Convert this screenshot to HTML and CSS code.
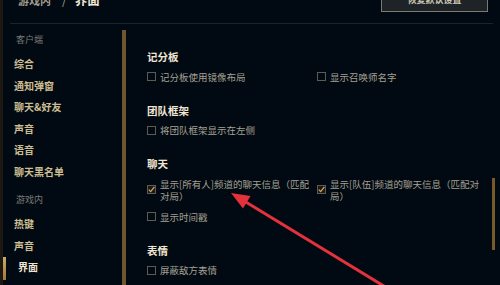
FILE: index.html
```html
<!DOCTYPE html>
<html lang="zh-CN">
<head>
<meta charset="utf-8">
<link rel="stylesheet" href="styles.css">
</head>
<body>
<div class="app">
  <div class="edge"></div>
  <div class="main">
    <header class="header">
      <div class="crumb"><span class="crumb-parent">游戏内</span><span class="crumb-sep">/</span><span class="crumb-cur">界面</span></div>
      <button class="reset">恢复默认设置</button>
    </header>
    <div class="body">
      <nav class="sidebar">
        <div class="nav-label">客户端</div>
        <div class="nav-item">综合</div>
        <div class="nav-item">通知弹窗</div>
        <div class="nav-item">聊天&amp;好友</div>
        <div class="nav-item">声音</div>
        <div class="nav-item">语音</div>
        <div class="nav-item">聊天黑名单</div>
        <div class="nav-label second">游戏内</div>
        <div class="nav-item">热键</div>
        <div class="nav-item">声音</div>
        <div class="nav-item active">界面</div>
      </nav>
      <div class="nav-scroll"></div>
      <div class="content">
        <div class="settings">
          <section class="group">
            <h3 class="group-title">记分板</h3>
            <div class="opts">
              <label class="opt"><span class="box"></span><span class="opt-text">记分板使用镜像布局</span></label>
              <label class="opt"><span class="box"></span><span class="opt-text">显示召唤师名字</span></label>
            </div>
          </section>
          <section class="group">
            <h3 class="group-title">团队框架</h3>
            <div class="opts">
              <label class="opt"><span class="box"></span><span class="opt-text">将团队框架显示在左侧</span></label>
            </div>
          </section>
          <section class="group">
            <h3 class="group-title">聊天</h3>
            <div class="opts">
              <label class="opt"><span class="box checked"><svg viewBox="0 0 9 9" width="9" height="9"><path d="M1.8 4.6 L3.7 6.6 L7.4 1.8" fill="none" stroke="#c8aa6e" stroke-width="1.3"/></svg></span><span class="opt-text">显示[所有人]频道的聊天信息（匹配对局）</span></label>
              <label class="opt"><span class="box checked"><svg viewBox="0 0 9 9" width="9" height="9"><path d="M1.8 4.6 L3.7 6.6 L7.4 1.8" fill="none" stroke="#c8aa6e" stroke-width="1.3"/></svg></span><span class="opt-text">显示[队伍]频道的聊天信息（匹配对局）</span></label>
              <label class="opt"><span class="box"></span><span class="opt-text">显示时间戳</span></label>
            </div>
          </section>
          <section class="group">
            <h3 class="group-title">表情</h3>
            <div class="opts">
              <label class="opt"><span class="box"></span><span class="opt-text">屏蔽敌方表情</span></label>
            </div>
          </section>
        </div>
        <div class="vscroll"><div class="vthumb"></div></div>
      </div>
    </div>
  </div>
  <svg class="arrow" viewBox="0 0 500 285" width="500" height="285">
    <line x1="392" y1="291" x2="245" y2="201.5" stroke="#e5323a" stroke-width="3" stroke-linecap="round"/>
    <polygon points="231,193 243,208.5 250.5,196" fill="#e5323a"/>
  </svg>
</div>
</body>
</html>
```

FILE: styles.css
```css
html, body {
  margin: 0;
  padding: 0;
  height: 100%;
  overflow: hidden;
  background: #010a13;
}
body {
  font-family: "Noto Sans CJK SC", "Noto Sans", sans-serif;
  color: #a09b8c;
}
.app {
  position: relative;
  display: flex;
  height: 285px;
  width: 500px;
  overflow: hidden;
}
.edge {
  width: 3px;
  flex-shrink: 0;
  background: #1d1812;
}
.main {
  flex: 1;
  display: flex;
  flex-direction: column;
  min-width: 0;
}
.header {
  height: 23px;
  margin: 0 7px 0 7px;
  border-bottom: 1px solid #1b2329;
  display: flex;
  justify-content: space-between;
  align-items: flex-start;
  flex-shrink: 0;
}
.crumb {
  margin-top: -8px;
  margin-left: 8px;
  display: flex;
  align-items: center;
  font-size: 12px;
  line-height: 16px;
  font-weight: 700;
}
.crumb-parent {
  color: #a09b8c;
  font-size: 11px;
}
.crumb-sep {
  color: #a09b8c;
  margin: 0 8px 0 11px;
  font-weight: 400;
}
.crumb-cur {
  color: #f0e6d2;
  font-size: 12.5px;
}
.reset {
  margin-top: -12px;
  margin-right: 5px;
  width: 107px;
  height: 24px;
  background: #1e2328;
  border: 1px solid #7c7a6e;
  color: #cdc6b2;
  font-family: inherit;
  font-size: 9px;
  font-weight: 700;
  padding: 0;
  line-height: 22px;
}
.body {
  flex: 1;
  display: flex;
  min-height: 0;
}
.sidebar {
  position: relative;
  width: 119px;
  flex-shrink: 0;
  padding-top: 10px;
  box-sizing: border-box;
}
.nav-label {
  font-size: 9px;
  line-height: 12px;
  color: #7b7a74;
  padding-left: 13px;
  margin-bottom: 7px;
}
.nav-label.second {
  margin-top: 12px;
}
.nav-item {
  position: relative;
  height: 21.5px;
  line-height: 21.5px;
  font-size: 10px;
  font-weight: 700;
  color: #cdbe91;
  padding-left: 11px;
}
.nav-item.active {
  color: #f0e6d2;
  padding-left: 15px;
}
.nav-item.active::before {
  content: "";
  position: absolute;
  left: 0;
  top: 1px;
  width: 3px;
  height: 23px;
  background: linear-gradient(#c8aa6e, #a27a32);
}
.nav-scroll {
  width: 4px;
  flex-shrink: 0;
  margin-top: 6px;
  background: #6f5630;
}
.content {
  flex: 1;
  display: flex;
  min-width: 0;
}
.settings {
  flex: 1;
  padding: 26px 0 0 21px;
}
.group {
  margin-bottom: 21px;
}
.group-title {
  margin: 0 0 6.5px 0;
  font-size: 10.5px;
  line-height: 14px;
  font-weight: 700;
  color: #f0e6d2;
}
.opts {
  display: grid;
  grid-template-columns: 170px 170px;
  row-gap: 9px;
}
.opt {
  display: flex;
  align-items: center;
  gap: 4px;
}
.box {
  width: 9px;
  height: 9px;
  flex-shrink: 0;
  box-sizing: border-box;
  border: 1px solid #5e5b52;
  position: relative;
}
.box.checked {
  background: #1e1a13;
}
.box svg {
  position: absolute;
  left: -1px;
  top: -1px;
}
.opt-text {
  width: 153px;
  font-size: 9.5px;
  line-height: 12px;
  color: #a5a092;
}
.vscroll {
  width: 3px;
  margin-right: 5px;
  flex-shrink: 0;
}
.vthumb {
  margin-top: 154px;
  height: 72px;
  background: #785a28;
}
.arrow {
  position: absolute;
  left: 0;
  top: 0;
  pointer-events: none;
}
```
